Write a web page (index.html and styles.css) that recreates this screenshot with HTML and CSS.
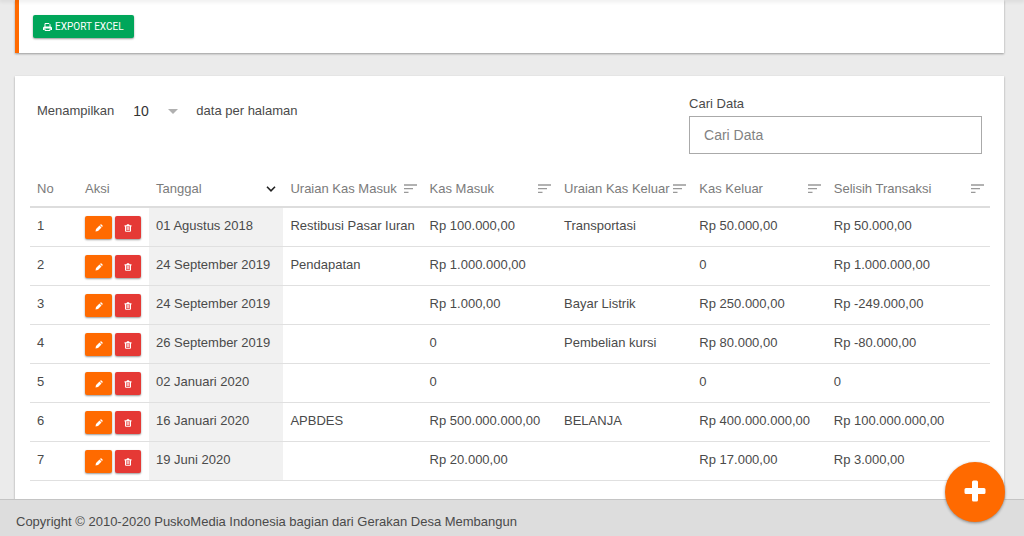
FILE: index.html
```html
<!DOCTYPE html>
<html lang="id">
<head>
<meta charset="utf-8">
<meta name="viewport" content="width=device-width, initial-scale=1">
<title>Kas Desa</title>
<link rel="stylesheet" href="styles.css">
</head>
<body>
<svg class="sprite" aria-hidden="true">
  <symbol id="print" viewBox="0 0 18 16"><path fill="none" stroke="currentColor" stroke-width="2" d="M4 8V1h8l2 2v5M4 11v4h10v-4"/><path fill="currentColor" d="M3 7h12q3 0 3 3v4h-3v-3H3v3H0v-4q0-3 3-3z"/></symbol>
  <symbol id="pencil" viewBox="0 0 16 16"><path fill="currentColor" d="M1 15l1-5 7-7 4 4-7 7zM10 2l1-1q1-1 2 0l2 2q1 1 0 2l-1 1z"/></symbol>
  <symbol id="trash" viewBox="0 0 16 16"><path fill="currentColor" d="M1 2.500h4L6 .5h4l1 2h4v2.300H1z"/><path fill="none" stroke="currentColor" stroke-width="2" d="M3 4v10.500h10V4M6.300 6v6M9.700 6v6"/></symbol>
  <symbol id="sort" viewBox="0 0 14 10"><path fill="none" stroke="currentColor" stroke-width="1.300" d="M0 1h13M0 4.700h9M0 8.400h4.500"/></symbol>
  <symbol id="down" viewBox="0 0 10 6"><path fill="none" stroke="currentColor" stroke-width="1.600" d="M1 .8l4 4 4-4"/></symbol>
</svg>
<header class="topbar"></header>
<main class="content">
  <section class="card card-accent">
    <button type="button" class="btn btn-export"><svg class="icon-print"><use href="#print"/></svg>EXPORT EXCEL</button>
  </section>
  <section class="card card-table">
    <div class="toolbar">
      <label class="length">Menampilkan
        <span class="select-wrap"><select class="select"><option>10</option><option>25</option><option>50</option></select></span>
        data per halaman</label>
      <div class="search">
        <label for="cari">Cari Data</label>
        <input id="cari" class="search-input" type="text" placeholder="Cari Data">
      </div>
    </div>
    <table class="table">
      <colgroup><col class="c-no"><col class="c-aksi"><col class="c-mid"><col class="c-in"><col class="c-mid"><col class="c-out"><col class="c-mid"><col></colgroup>
      <thead><tr>
        <th>No</th><th>Aksi</th>
        <th><div class="head">Tanggal<svg class="icon-down"><use href="#down"/></svg></div></th>
        <th><div class="head">Uraian Kas Masuk<svg class="icon-sort"><use href="#sort"/></svg></div></th>
        <th><div class="head">Kas Masuk<svg class="icon-sort"><use href="#sort"/></svg></div></th>
        <th><div class="head">Uraian Kas Keluar<svg class="icon-sort"><use href="#sort"/></svg></div></th>
        <th><div class="head">Kas Keluar<svg class="icon-sort"><use href="#sort"/></svg></div></th>
        <th><div class="head">Selisih Transaksi<svg class="icon-sort"><use href="#sort"/></svg></div></th>
      </tr></thead>
      <tbody>
        <tr><td>1</td><td><div class="actions"><button type="button" class="btn btn-edit" aria-label="Ubah"><svg class="icon-act"><use href="#pencil"/></svg></button><button type="button" class="btn btn-delete" aria-label="Hapus"><svg class="icon-act"><use href="#trash"/></svg></button></div></td><td class="sorted">01 Agustus 2018</td><td>Restibusi Pasar Iuran</td><td>Rp 100.000,00</td><td>Transportasi</td><td>Rp 50.000,00</td><td>Rp 50.000,00</td></tr>
        <tr><td>2</td><td><div class="actions"><button type="button" class="btn btn-edit" aria-label="Ubah"><svg class="icon-act"><use href="#pencil"/></svg></button><button type="button" class="btn btn-delete" aria-label="Hapus"><svg class="icon-act"><use href="#trash"/></svg></button></div></td><td class="sorted">24 September 2019</td><td>Pendapatan</td><td>Rp 1.000.000,00</td><td></td><td>0</td><td>Rp 1.000.000,00</td></tr>
        <tr><td>3</td><td><div class="actions"><button type="button" class="btn btn-edit" aria-label="Ubah"><svg class="icon-act"><use href="#pencil"/></svg></button><button type="button" class="btn btn-delete" aria-label="Hapus"><svg class="icon-act"><use href="#trash"/></svg></button></div></td><td class="sorted">24 September 2019</td><td></td><td>Rp 1.000,00</td><td>Bayar Listrik</td><td>Rp 250.000,00</td><td>Rp -249.000,00</td></tr>
        <tr><td>4</td><td><div class="actions"><button type="button" class="btn btn-edit" aria-label="Ubah"><svg class="icon-act"><use href="#pencil"/></svg></button><button type="button" class="btn btn-delete" aria-label="Hapus"><svg class="icon-act"><use href="#trash"/></svg></button></div></td><td class="sorted">26 September 2019</td><td></td><td>0</td><td>Pembelian kursi</td><td>Rp 80.000,00</td><td>Rp -80.000,00</td></tr>
        <tr><td>5</td><td><div class="actions"><button type="button" class="btn btn-edit" aria-label="Ubah"><svg class="icon-act"><use href="#pencil"/></svg></button><button type="button" class="btn btn-delete" aria-label="Hapus"><svg class="icon-act"><use href="#trash"/></svg></button></div></td><td class="sorted">02 Januari 2020</td><td></td><td>0</td><td></td><td>0</td><td>0</td></tr>
        <tr><td>6</td><td><div class="actions"><button type="button" class="btn btn-edit" aria-label="Ubah"><svg class="icon-act"><use href="#pencil"/></svg></button><button type="button" class="btn btn-delete" aria-label="Hapus"><svg class="icon-act"><use href="#trash"/></svg></button></div></td><td class="sorted">16 Januari 2020</td><td>APBDES</td><td>Rp 500.000.000,00</td><td>BELANJA</td><td>Rp 400.000.000,00</td><td>Rp 100.000.000,00</td></tr>
        <tr><td>7</td><td><div class="actions"><button type="button" class="btn btn-edit" aria-label="Ubah"><svg class="icon-act"><use href="#pencil"/></svg></button><button type="button" class="btn btn-delete" aria-label="Hapus"><svg class="icon-act"><use href="#trash"/></svg></button></div></td><td class="sorted">19 Juni 2020</td><td></td><td>Rp 20.000,00</td><td></td><td>Rp 17.000,00</td><td>Rp 3.000,00</td></tr>
      </tbody>
    </table>
  </section>
</main>
<footer class="footer">Copyright © 2010-2020 PuskoMedia Indonesia bagian dari Gerakan Desa Membangun</footer>
<button type="button" class="fab" aria-label="Tambah"><svg class="icon-plus" viewBox="0 0 22 22"><path fill="currentColor" d="M9.500.5h3q1.500 0 1.500 1.500v6h6q1.500 0 1.500 1.500v3q0 1.500-1.500 1.500h-6v6q0 1.500-1.500 1.500h-3Q8 21.500 8 20v-6H2Q.5 14 .5 12.500v-3Q.5 8 2 8h6V2Q8 .5 9.500.5z"/></svg></button>
</body>
</html>
```
FILE: styles.css
```css
* { box-sizing: border-box; }
body {
  margin: 0;
  background: #ebebeb;
  color: #4a4a4a;
  font: 13px/20px "Liberation Sans", Arial, sans-serif;
}
.sprite { position: absolute; width: 0; height: 0; }
.topbar { position: fixed; top: 0; left: 0; right: 0; height: 0; box-shadow: 0 0 4px 1px rgba(0, 0, 0, .15); }
.content { padding: 0 20px 0 15px; }
.card { background: #fff; box-shadow: 0 1px 2px rgba(0, 0, 0, .35); }
.card-accent { border-left: 4px solid #ff6a00; padding: 15px 14px; margin-bottom: 23px; }
.card-table { padding: 18px 14px 48px 15px; }
.btn {
  display: inline-flex;
  align-items: center;
  justify-content: center;
  border: 0;
  border-radius: 2px;
  padding: 0;
  height: 23px;
  color: #fff;
  font: 10px/16px Roboto, "Liberation Sans", sans-serif;
  box-shadow: 0 1px 2px rgba(0, 0, 0, .4);
}
.btn-export { display: flex; gap: 3px; padding: 0 10px; background: #00a65a; }
.btn-edit { width: 27px; background: #ff6a00; }
.btn-delete { width: 26px; background: #e53935; }
.icon-print { width: 9px; height: 8px; }
.icon-act { width: 8px; height: 8px; }
.toolbar { display: flex; justify-content: space-between; align-items: flex-start; padding: 0 8px 0 7px; }
.length { display: flex; align-items: center; padding-top: 7px; }
.select-wrap { position: relative; margin: 0 18px 0 19px; }
.select {
  appearance: none;
  display: block;
  width: 45px;
  height: 20px;
  border: 0;
  padding: 0;
  background: transparent;
  color: #333;
  font: 14px/20px "Liberation Sans", Arial, sans-serif;
}
.select-wrap::after {
  content: "";
  position: absolute;
  right: 0;
  top: 8px;
  border: 5px solid transparent;
  border-top-color: #b0b0b0;
  border-bottom: 0;
  pointer-events: none;
}
.search { width: 31%; }
.search label { display: block; margin-bottom: 2px; }
.search-input {
  display: block;
  width: 100%;
  height: 38px;
  border: 1px solid #aaa;
  padding: 0 14px;
  font: 14px/20px "Liberation Sans", Arial, sans-serif;
}
.search-input::placeholder { color: #828282; opacity: 1; }
.table { width: 100%; margin-top: 17px; table-layout: fixed; border-collapse: separate; border-spacing: 0; }
.c-no { width: 5%; }
.c-aksi { width: 7.4%; }
.c-mid { width: 14%; }
.c-in { width: 14.5%; }
.c-out { width: 14.1%; }
th { padding: 8px 5px 7px 7px; color: #7b7b7b; font-weight: 400; text-align: left; white-space: nowrap; border-bottom: 2px solid #ddd; }
td { height: 39px; padding: 8px 0 7px 7px; line-height: 20px; vertical-align: top; white-space: nowrap; border-bottom: 1px solid #e0e0e0; }
.sorted { background: #f1f1f1; }
.head { display: flex; align-items: center; justify-content: space-between; }
.icon-sort { flex: none; width: 14px; height: 10px; color: #999; }
.icon-down { flex: none; width: 10px; height: 6px; margin-right: 2px; color: #222; }
.actions { display: flex; gap: 3px; }
.footer {
  position: fixed;
  left: 0;
  right: 0;
  bottom: 0;
  padding: 12px 16px 4px;
  background: #ddd;
  border-top: 1px solid #c4c4c4;
}
.fab {
  position: fixed;
  right: 19px;
  bottom: 14px;
  display: flex;
  align-items: center;
  justify-content: center;
  width: 60px;
  height: 60px;
  padding: 0 0 3px;
  border: 0;
  border-radius: 50%;
  background: #ff6a00;
  color: #fff;
  box-shadow: 0 1px 3px rgba(0, 0, 0, .4);
}
.icon-plus { width: 22px; height: 22px; }
```
